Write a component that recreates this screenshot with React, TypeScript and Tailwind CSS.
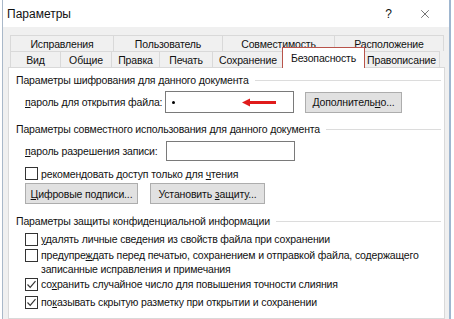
import { X } from 'lucide-react';

// Диалог "Параметры" Word — вкладка "Безопасность"

const topTabs = [
  { label: 'Исправления', w: 'w-[103px]' },
  { label: 'Пользователь', w: 'w-[109px]' },
  { label: 'Совместимость', w: 'w-[112px]' },
  { label: 'Расположение', w: 'w-[110px]' },
];

function Section({ title, className = '' }: { title: string; className?: string }) {
  return (
    <div className={`flex items-center h-[16px] pl-[7px] pr-[3px] ${className}`}>
      <span className="whitespace-nowrap">{title}</span>
      <div className="flex-1 h-px bg-[#dcdcdc] ml-[6px]" />
    </div>
  );
}

function CheckBox({ checked = false }: { checked?: boolean }) {
  return (
    <div className="w-[13px] h-[13px] shrink-0 border border-[#333] bg-white flex items-center justify-center">
      {checked && (
        <svg width="11" height="11" viewBox="0 0 11 11">
          <path d="M1.5 5.5 L4.2 8.3 L9.5 2.2" fill="none" stroke="#333" strokeWidth="1.2" />
        </svg>
      )}
    </div>
  );
}

function Btn({ children, className = '' }: { children: React.ReactNode; className?: string }) {
  return (
    <div className={`h-[21px] flex items-center justify-center whitespace-nowrap bg-[#e1e1e1] border border-[#adadad] ${className}`}>
      <span>{children}</span>
    </div>
  );
}

export default function App() {
  return (
    <div className="w-[454px] h-[319px] overflow-hidden bg-white text-[10.5px] leading-[14px] tracking-[-0.15px] text-[#111] font-['Liberation_Sans',sans-serif]">
      <div className="ml-[2px] w-[449px] h-full flex flex-col border-l border-[#a9b8c9] border-r-2 border-r-[#9fb6cf]">
        {/* заголовок окна */}
        <div className="h-[27px] shrink-0 bg-white flex items-center pl-[4px] text-[12px] tracking-normal">
          <span>Параметры</span>
          <span className="ml-auto mr-[26px] text-[12px]">?</span>
          <X className="w-[14px] h-[14px] mr-[17px]" strokeWidth={1} />
        </div>

        <div className="flex-1 bg-[#f0f0f0] pl-[5px] pr-[4px] pt-[8px] flex flex-col">
          {/* вкладки, верхний ряд */}
          <div className="flex h-[16px] ml-[2px]">
            {topTabs.map((t) => (
              <div
                key={t.label}
                className={`${t.w} h-full flex items-center justify-center whitespace-nowrap border-l border-t border-[#d9d9d9] last:border-r`}
              >
                {t.label}
              </div>
            ))}
          </div>
          {/* нижний ряд */}
          <div className="flex h-[16px] ml-[2px] items-end whitespace-nowrap">
            <div className="w-[50px] h-full flex items-center justify-center border-l border-t border-[#d9d9d9]">Вид</div>
            <div className="w-[51px] h-full flex items-center justify-center border-l border-t border-[#d9d9d9]">Общие</div>
            <div className="w-[48px] h-full flex items-center justify-center border-l border-t border-[#d9d9d9]">Правка</div>
            <div className="w-[53px] h-full flex items-center justify-center border-l border-t border-[#d9d9d9]">Печать</div>
            <div className="w-[71px] h-full flex items-center justify-center border-l border-t border-[#d9d9d9]">Сохранение</div>
            <div className="relative z-10 w-[83px] h-[21px] -mx-[1px] -mb-px flex items-center justify-center bg-white border border-b-0 border-[#b8534a]">
              Безопасность
            </div>
            <div className="w-[76px] h-full flex items-center justify-center border-t border-r border-[#d9d9d9]">Правописание</div>
          </div>

          {/* панель */}
          <div className="flex-1 bg-white border border-[#d9d9d9] pt-[4px] whitespace-nowrap">
            <Section title="Параметры шифрования для данного документа" />

            <div className="flex items-center h-[22px] mt-[3px] pl-[16px]">
              <span className="w-[140px]"><u>п</u>ароль для открытия файла:</span>
              <div className="relative w-[129px] h-full border border-[#7a7a7a] bg-white flex items-center pl-[6px]">
                <span className="w-[3px] h-[3px] rounded-full bg-black" />
                {/* красная стрелка */}
                <svg className="absolute left-[75px] top-[6px]" width="36" height="9" viewBox="0 0 36 9">
                  <path d="M35 4.5 H8" stroke="#e01b1b" strokeWidth="3" />
                  <path d="M1 4.5 L9 0.5 L9 8.5 Z" fill="#e01b1b" />
                </svg>
              </div>
              <Btn className="w-[97px] ml-[11px]">Дополнитель<u>н</u>о...</Btn>
            </div>

            <Section title="Параметры совместного использования для данного документа" className="mt-[8px]" />

            <div className="flex items-center h-[20px] mt-[4px] pl-[16px]">
              <span className="w-[141px]"><u>п</u>ароль разрешения записи:</span>
              <div className="w-[129px] h-full border border-[#7a7a7a] bg-white" />
            </div>

            <div className="flex items-center h-[15px] mt-[5px] pl-[16px] gap-[3px]">
              <CheckBox />
              <span>рекомендовать доступ только для <u>ч</u>тения</span>
            </div>

            <div className="flex items-center mt-[2px] pl-[16px] gap-[12px]">
              <Btn className="w-[113px] h-[20px]"><u>Ц</u>ифровые подписи...</Btn>
              <Btn className="w-[115px] h-[20px]">Установить <u>з</u>ащиту...</Btn>
            </div>

            <Section title="Параметры защиты конфиденциальной информации" className="mt-[9px]" />

            <div className="flex items-center h-[14px] mt-[3px] pl-[16px] gap-[3px]">
              <CheckBox />
              <span><u>у</u>далять личные сведения из свойств файла при сохранении</span>
            </div>

            <div className="flex items-start mt-[2px] pl-[16px] gap-[3px]">
              <div className="pt-[1px]"><CheckBox /></div>
              <span>
                предупре<u>ж</u>дать перед печатью, сохранением и отправкой файла, содержащего
                <br />
                записанные исправления и примечания
              </span>
            </div>

            <div className="flex items-center h-[14px] mt-[1px] pl-[16px] gap-[3px]">
              <CheckBox checked />
              <span>со<u>х</u>ранить случайное число для повышения точности слияния</span>
            </div>

            <div className="flex items-center h-[14px] mt-[4px] pl-[16px] gap-[3px]">
              <CheckBox checked />
              <span>по<u>к</u>азывать скрытую разметку при открытии и сохранении</span>
            </div>
          </div>
        </div>
      </div>
    </div>
  );
}
